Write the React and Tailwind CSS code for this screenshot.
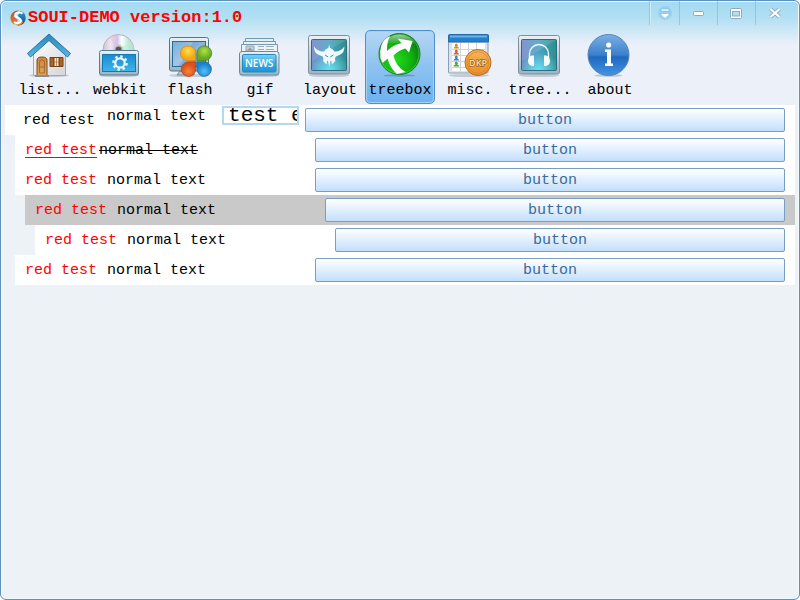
import React from "react";

const MONO = "font-['Liberation_Mono','Noto_Sans_CJK_SC',monospace]";

function Logo() {
  return (
    <svg viewBox="0 0 16 16" className="size-4 shrink-0" aria-hidden="true">
      <defs>
        <linearGradient id="logoOrange" x1="0" y1="0" x2="0" y2="1">
          <stop offset="0" stopColor="#b5532c" />
          <stop offset="1" stopColor="#f2792b" />
        </linearGradient>
        <linearGradient id="logoBlue" x1="0" y1="0" x2="0" y2="1">
          <stop offset="0" stopColor="#2d9bd8" />
          <stop offset="1" stopColor="#174a78" />
        </linearGradient>
      </defs>
      <path d="M9 .5C4 .2.5 3.500.5 8c0 3 1.500 5.500 4 6.700L8 10 3.500 6.500Z" fill="url(#logoOrange)" />
      <path d="M10 .8c3.500.8 5.700 3.700 5.700 7.200 0 4.500-3.500 7.700-8 7.500l4.800-5L8 6Z" fill="url(#logoBlue)" />
      <path d="M5 14.800q5-.6 6.500-3.500l2 .5q-2 3.700-5.500 3.700Z" fill="#f2792b" />
      <path d="M12.500 3.600C10 1.800 5.400 2.200 5.200 5c-.1 2.800 5.800 2.900 5.700 5.700-.1 2.600-4.400 3.200-7 1.500" fill="none" stroke="#fff" strokeWidth="2" />
    </svg>
  );
}

function Icon({ children }) {
  return (
    <svg viewBox="0 0 48 48" className="size-12 shrink-0" aria-hidden="true">
      {children}
    </svg>
  );
}

function SharedDefs() {
  return (
    <svg className="absolute size-0" aria-hidden="true">
      <defs>
        <linearGradient id="roof" x1="0" y1="0" x2="0" y2="1">
          <stop offset="0" stopColor="#2c86b8" />
          <stop offset="1" stopColor="#55b8e6" />
        </linearGradient>
        <linearGradient id="wall" x1="0" y1="0" x2="1" y2="1">
          <stop offset="0" stopColor="#ffffff" />
          <stop offset="1" stopColor="#d3d5d9" />
        </linearGradient>
        <linearGradient id="door" x1="0" y1="0" x2="0" y2="1">
          <stop offset="0" stopColor="#c98444" />
          <stop offset="1" stopColor="#e2a65a" />
        </linearGradient>
        <linearGradient id="box" x1="0" y1="0" x2="0" y2="1">
          <stop offset="0" stopColor="#eaf1f4" />
          <stop offset="1" stopColor="#9fb3be" />
        </linearGradient>
        <linearGradient id="panel" x1="0" y1="0" x2="0" y2="1">
          <stop offset="0" stopColor="#178bd0" />
          <stop offset="1" stopColor="#3fb4ea" />
        </linearGradient>
        <linearGradient id="news" x1="0" y1="0" x2="0" y2="1">
          <stop offset="0" stopColor="#82d0f2" />
          <stop offset=".45" stopColor="#3fb0e6" />
          <stop offset="1" stopColor="#1a93d6" />
        </linearGradient>
        <linearGradient id="disc" x1="0" y1="0" x2="1" y2="0">
          <stop offset="0" stopColor="#c8c9cd" />
          <stop offset=".25" stopColor="#f3e3f1" />
          <stop offset=".45" stopColor="#c9c4ee" />
          <stop offset=".6" stopColor="#ffffff" />
          <stop offset=".8" stopColor="#c6eadb" />
          <stop offset="1" stopColor="#c3c5ca" />
        </linearGradient>
        <linearGradient id="screen" x1="0" y1="0" x2="1" y2="1">
          <stop offset="0" stopColor="#4c9bd0" />
          <stop offset=".5" stopColor="#8db4dd" />
          <stop offset="1" stopColor="#3a8bc8" />
        </linearGradient>
        <linearGradient id="tile" x1="0" y1="0" x2="1" y2="0">
          <stop offset="0" stopColor="#7486c4" />
          <stop offset=".5" stopColor="#4aa3c4" />
          <stop offset="1" stopColor="#2c8f88" />
        </linearGradient>
        <radialGradient id="tileGlow" cx=".5" cy="1" r=".6">
          <stop offset="0" stopColor="#6ce0ef" />
          <stop offset="1" stopColor="#6ce0ef" stopOpacity="0" />
        </radialGradient>
        <radialGradient id="green" cx=".4" cy=".65" r=".65">
          <stop offset="0" stopColor="#22dc1c" />
          <stop offset=".6" stopColor="#10b30f" />
          <stop offset="1" stopColor="#087c12" />
        </radialGradient>
        <linearGradient id="gloss" x1="0" y1="0" x2="0" y2="1">
          <stop offset="0" stopColor="#fff" stopOpacity=".6" />
          <stop offset="1" stopColor="#fff" stopOpacity="0" />
        </linearGradient>
        <linearGradient id="info" x1="0" y1="0" x2="0" y2="1">
          <stop offset="0" stopColor="#7dafe3" />
          <stop offset=".5" stopColor="#3a7fcd" />
          <stop offset=".55" stopColor="#1f68bf" />
          <stop offset="1" stopColor="#4594e2" />
        </linearGradient>
        <linearGradient id="coin" x1="0" y1="0" x2="0" y2="1">
          <stop offset="0" stopColor="#f9b658" />
          <stop offset="1" stopColor="#e98d28" />
        </linearGradient>
        <radialGradient id="pYellow" cy=".35"><stop offset="0" stopColor="#ffe04a" /><stop offset="1" stopColor="#f6a615" /></radialGradient>
        <radialGradient id="pGreen" cy=".35"><stop offset="0" stopColor="#b0e048" /><stop offset="1" stopColor="#67aa22" /></radialGradient>
        <radialGradient id="pRed" cy=".65"><stop offset="0" stopColor="#fa8438" /><stop offset="1" stopColor="#d94f1e" /></radialGradient>
        <radialGradient id="pBlue" cy=".65"><stop offset="0" stopColor="#55c0f6" /><stop offset="1" stopColor="#1e84d0" /></radialGradient>
      </defs>
    </svg>
  );
}

const Shadow = () => <ellipse cx="23" cy="44.500" rx="20" ry="1.600" fill="#7a8794" opacity=".35" />;

function HouseIcon() {
  return (
    <Icon>
      <Shadow />
      <path d="M7.500 20 23 7l16.500 13v24.500h-32Z" fill="url(#wall)" stroke="#a5a8ad" strokeWidth="1" />
      <path d="M23 3 1.500 22.500l3 3.500L23 9.500 41.500 26l3-3.500Z" fill="url(#roof)" stroke="#2878a4" strokeWidth="1" strokeLinejoin="round" />
      <path d="M11 45V29q0-3 5-3t5 3v16Z" fill="url(#door)" stroke="#7b4c20" />
      <path d="M13.500 42V31q0-2 2.500-2t2.500 2v11ZM13.500 36h5" fill="none" stroke="#a86a2d" />
      <path d="M24 26.500h4v9h-4ZM33 26.500h4v9h-4Z" fill="#a9672f" stroke="#71431d" />
      <path d="M28 26.500h5v9h-5Z" fill="#fde8bd" stroke="#71431d" />
      <path d="M30.500 26.500v9M28 31h5" stroke="#a9672f" strokeWidth=".7" />
      <path d="M9 44h14v2H9Z" fill="#858d96" />
    </Icon>
  );
}

function WebkitIcon() {
  return (
    <Icon>
      <Shadow />
      <circle cx="22.500" cy="19" r="15.500" fill="url(#disc)" stroke="#aeb2ba" />
      <path d="M22.500 19 13 6.500q5-3 9-3Z" fill="#f5b8cf" opacity=".4" />
      <path d="m22.500 19 13-9q3 4 3 9Z" fill="#b6efcf" opacity=".5" />
      <circle cx="22.500" cy="18.500" r="4" fill="#5b5552" stroke="#c8c8cb" strokeWidth="2" />
      <rect x="3.500" y="19.500" width="39" height="24.500" rx="2" fill="url(#box)" stroke="#547f9a" />
      <rect x="6.500" y="23.500" width="33" height="17" fill="url(#panel)" stroke="#1976ae" />
      <circle cx="24" cy="32" r="4.700" fill="none" stroke="#eef7fc" strokeWidth="2.200" />
      <circle cx="24" cy="32" r="6.600" fill="none" stroke="#eef7fc" strokeWidth="2.400" strokeDasharray="2.500 2.680" />
    </Icon>
  );
}

function FlashIcon() {
  return (
    <Icon>
      <Shadow />
      <path d="M14 40h14v4H11Z" fill="#b8cbd5" stroke="#708b9d" />
      <rect x="3.500" y="6.500" width="39" height="33.500" rx="2" fill="url(#box)" stroke="#52778d" />
      <rect x="6.500" y="10.500" width="33" height="25" fill="url(#screen)" stroke="#2a6b96" />
      <path d="M7 11h20L13 35H7Z" fill="#fff" opacity=".22" />
      <path d="M22.500 15a7 7 0 0 1 7.200 7v7.500h-7.200a7.300 7.300 0 1 1 0-14.500Z" fill="url(#pYellow)" stroke="#d98210" strokeWidth=".7" />
      <path d="M38.500 15a7.200 7.200 0 1 1 0 14.500H31V22a7 7 0 0 1 7.500-7Z" fill="url(#pGreen)" stroke="#4d8416" strokeWidth=".7" />
      <path d="M22.500 31h7.200v7.500a7.200 7.200 0 1 1-7.200-7.500Z" fill="url(#pRed)" stroke="#b43d16" strokeWidth=".7" />
      <path d="M31 31h7.500a7.200 7.200 0 1 1-7.500 7.500Z" fill="url(#pBlue)" stroke="#1367a8" strokeWidth=".7" />
    </Icon>
  );
}

function NewsIcon() {
  return (
    <Icon>
      <Shadow />
      <path d="M9.500 7.500h28V20h-28Z" fill="#e1edf4" stroke="#6f9bb3" />
      <path d="M7.500 10.500h32V20h-32Z" fill="#e7f0f5" stroke="#6f9bb3" />
      <path d="M5.500 13.500h36V22h-36Z" fill="#edf2f5" stroke="#6f9bb3" />
      <path d="M10 15h8v5h-8Z" fill="#c6cdd6" stroke="#9aa6b3" />
      <path d="m11 19.500 3-3 3 3Z" fill="#8f9cab" />
      <path d="M22 15.500h6m2 0h8M22 18.500h6m2 0h8" stroke="#a0abb6" />
      <rect x="3.500" y="20.500" width="39.500" height="23.500" rx="2.500" fill="url(#box)" stroke="#5c8faa" />
      <rect x="6.500" y="23.500" width="33.500" height="17.500" rx="1.500" fill="url(#news)" stroke="#2687ba" />
      <text x="23.200" y="36" textAnchor="middle" fill="#fff" className="font-['Open_Sans',sans-serif] text-[10px] font-semibold">NEWS</text>
    </Icon>
  );
}

function Tile({ children }) {
  return (
    <Icon>
      <Shadow />
      <rect x="2.500" y="4.500" width="41" height="38.500" rx="2" fill="url(#box)" stroke="#7b929e" />
      <rect x="5.500" y="8.500" width="35" height="31" rx="1" fill="url(#tile)" stroke="#2f6d86" />
      <rect x="6" y="9" width="34" height="30" fill="url(#tileGlow)" />
      <path d="M6 9h34L6 30Z" fill="#fff" opacity=".12" />
      {children}
    </Icon>
  );
}

function LayoutIcon() {
  return (
    <Tile>
      <path d="M8 15.500q4 5.500 10 5l1.500-2 2.800-1.500.9-3.500.9 3.500 2.800 1.500 1.500 2q6 .5 10-5 0 6-4 8l-4.500 2-1 2 .5 2.500-3.500 3.500-.7-4-.8.500-1.200 6-1.200-6-.8-.500-.7 4-3.500-3.500.5-2.500-1-2-4.500-2q-4-2-4-8Z" fill="#edf9fc" />
      <path d="m19 24 3.200 2M27.400 24l-3.200 2" stroke="#3f91b1" />
    </Tile>
  );
}

function TreeboxIcon() {
  return (
    <Icon>
      <ellipse cx="23.500" cy="44.500" rx="16" ry="1.200" fill="#35658f" opacity=".4" />
      <circle cx="23.500" cy="23" r="20.500" fill="url(#green)" stroke="#16831c" />
      <path d="M7 14q5-10.500 16.500-10.500T40 14q-16-5-33 0Z" fill="url(#gloss)" />
      <circle cx="23.500" cy="23" r="19.500" fill="none" stroke="#8bea84" strokeOpacity=".4" />
      <path d="M14 5Q8 7.500 5.500 14 3.500 20 4.500 27L6.500 32Q11 28 11.500 27.500 14 37 21 43L29.500 41Q20 36 17.500 24.500 23 19 29.500 17.500l3.500 4L36.500 10 21.500 7.500l4 4.500Q17 14 11 20 10.500 12 14 5Z" fill="#fff" />
    </Icon>
  );
}

function MiscIcon() {
  const marks = [
    ["#d69029", 15],
    ["#d06128", 21],
    ["#3d7fd0", 27],
    ["#45ac30", 33],
  ];
  return (
    <Icon>
      <Shadow />
      <rect x="2.500" y="6.500" width="39.500" height="35.500" rx="1" fill="#dde3e9" stroke="#8ba0b5" />
      <path d="M6 12h33v28H6Z" fill="#fff" />
      <path d="M6 18.500h33M6 24.500h33M6 30.500h33M6 36.500h33M14.500 12v28M22.500 12v28M30.500 12v28" stroke="#cdd3dc" />
      {marks.map(([fill, y]) => (
        <path key={y} d={`M7.500 ${y + 2.5}q0-1.500 2-2a1.500 1.500 0 1 1 1.600 0q2 .5 2 2Z`} fill={fill} />
      ))}
      <path d="M2.500 11V4.500q0-1 1-1h38q1 0 1 1V11Z" fill="#2380cf" stroke="#2869a5" />
      <path d="M4 4.500h37v2H4Z" fill="#66b3ea" />
      <circle cx="32" cy="31.500" r="13" fill="url(#coin)" stroke="#b86c1e" />
      <circle cx="32" cy="31.500" r="10.800" fill="none" stroke="#d28731" strokeWidth=".8" />
      <text x="32" y="35" textAnchor="middle" fill="#ffdf9f" stroke="#a8621f" strokeWidth="1.400" paintOrder="stroke" className="font-['Open_Sans',sans-serif] text-[9px] font-semibold">DKP</text>
    </Icon>
  );
}

function HeadphonesIcon() {
  return (
    <Tile>
      <path d="M13.500 27v-4a9.500 9.500 0 0 1 19 0v4" fill="none" stroke="#f3fbfd" strokeWidth="1.300" />
      <path d="M16 24.500h2V35h-2q-4-1-4-5.200t4-5.300ZM30 24.500h-2V35h2q4-1 4-5.200t-4-5.300Z" fill="#f3fbfd" />
    </Tile>
  );
}

function InfoIcon() {
  return (
    <Icon>
      <ellipse cx="22.500" cy="44.500" rx="14" ry="1.300" fill="#7a8794" opacity=".4" />
      <circle cx="22.500" cy="24" r="20.500" fill="url(#info)" stroke="#5584ba" />
      <circle cx="22.700" cy="14" r="2.600" fill="#fff" />
      <path d="M19 18.500h6V32.500h2V35h-8v-2.500h2V21h-2Z" fill="#fff" />
    </Icon>
  );
}

const tools = [
  { label: "list...", Glyph: HouseIcon },
  { label: "webkit", Glyph: WebkitIcon },
  { label: "flash", Glyph: FlashIcon },
  { label: "gif", Glyph: NewsIcon },
  { label: "layout", Glyph: LayoutIcon },
  { label: "treebox", Glyph: TreeboxIcon, active: true },
  { label: "misc.", Glyph: MiscIcon },
  { label: "tree...", Glyph: HeadphonesIcon },
  { label: "about", Glyph: InfoIcon },
];

function ToolButton({ label, Glyph, active }) {
  const look = active
    ? "border-[#4f8fcb] bg-linear-to-b from-[#b4d6f3] via-[#8dc2ef] to-[#6cb2ef] shadow-[inset_0_0_0_1px_#a5d0f4]"
    : "border-transparent";
  return (
    <button type="button" aria-pressed={!!active} className={`flex h-[74px] w-[70px] flex-col items-center rounded-[5px] border ${look}`}>
      <Glyph />
      <span className="text-[15px] leading-6 text-black">{label}</span>
    </button>
  );
}

function Caption({ label, width, lit, children }) {
  return (
    <button
      type="button"
      aria-label={label}
      className={`flex h-6 ${width} items-center justify-center border-l border-[#7fb4d6]/60 ${lit ? "shadow-[inset_1px_1px_0_#d3effa]" : ""}`}
    >
      <svg viewBox="0 0 16 16" className="size-4" aria-hidden="true">{children}</svg>
    </button>
  );
}

function TitleBar() {
  return (
    <header className="flex h-7 items-start pl-[9px]">
      <h1 className="flex flex-1 items-center gap-0.5 pt-1 text-[17px] leading-6 font-bold text-[#ff0000]">
        <Logo />
        <span className="pt-px">SOUI-DEMO version:1.0</span>
      </h1>
      <div className="flex pr-1.5">
        <Caption label="Menu" width="w-[30px]" lit>
          <circle cx="8" cy="8" r="7" fill="#67b5e8" opacity=".3" />
          <path d="M4 4h8v2H4ZM4 8.500h8v1.500l-4 3.500-4-3.500Z" fill="#fff" stroke="#79b8df" strokeWidth=".6" />
        </Caption>
        <Caption label="Minimize" width="w-[38px]">
          <rect x="2.500" y="6.500" width="10" height="4" rx="1" fill="#fff" stroke="#87abc0" />
        </Caption>
        <Caption label="Maximize" width="w-[38px]">
          <rect x="1.500" y="3.500" width="11" height="10" rx="1" fill="#fff" stroke="#87abc0" />
          <rect x="3.500" y="6.500" width="7" height="4.500" fill="#b4def1" stroke="#87abc0" />
        </Caption>
        <Caption label="Close" width="w-[38px]">
          <path d="m3.500 4 9 8m0-8-9 8" stroke="#87abc0" strokeWidth="3.800" />
          <path d="m3.500 4 9 8m0-8-9 8" stroke="#fff" strokeWidth="2.200" />
        </Caption>
      </div>
    </header>
  );
}

function RowButton() {
  return (
    <button type="button" className="mr-2.5 h-6 flex-1 rounded-[2px] border border-[#7a9dc2] bg-linear-to-b from-white to-[#c3dffc] pt-0.5 text-[15px] leading-5 text-[#3d6a9c]">
      button
    </button>
  );
}

const rows = [
  { indent: "ml-2.5", marked: true },
  { indent: "ml-2.5" },
  { indent: "ml-5", selected: true },
  { indent: "ml-[30px]" },
  { indent: "ml-2.5" },
];

function TreeRow({ indent, marked, selected }) {
  return (
    <li className={`${indent} flex h-[30px] items-center ${selected ? "bg-[#c9c9c9]" : "bg-white"}`}>
      <p className={`flex w-[300px] shrink-0 pt-0.5 pl-2.5 ${marked ? "gap-0.5" : "gap-2.5"}`}>
        <span className={`text-[#ff0000] ${marked ? "underline decoration-[#ff0000] decoration-1 underline-offset-3" : ""}`}>red test</span>
        <span className={marked ? "line-through decoration-1" : ""}>normal text</span>
      </p>
      <RowButton />
    </li>
  );
}

export default function App() {
  return (
    <div className={`${MONO} flex min-h-screen flex-col rounded-md border border-[#5a91bd] bg-[#edf2f7] bg-[linear-gradient(#a3daf2_0,#b0dff3_16px,#ebf0f9_44px,#ecf0f9_140px,#edf2f7_150px)] text-[15px] leading-5 text-black shadow-[inset_0_0_0_1px_#f4fbff]`}>
      <SharedDefs />
      <TitleBar />
      <nav className="flex pt-px pl-3.5">
        {tools.map((tool) => (
          <ToolButton key={tool.label} {...tool} />
        ))}
      </nav>
      <main className="px-1 pt-px">
        <ul>
          <li className="flex h-[30px] bg-white">
            <div className="flex w-[300px] shrink-0 items-start pt-px pl-[18px]">
              <span className="pt-[5px]">red test</span>
              <span className="ml-3 pt-px">normal text</span>
              <input
                aria-label="Edit"
                defaultValue="test edit"
                className="ml-4 h-[19px] w-[77px] border-2 border-[#b4d9ee] bg-white pl-1 text-[21px] leading-6 outline-none"
              />
            </div>
            <div className="flex flex-1 items-center">
              <RowButton />
            </div>
          </li>
          {rows.map((row, i) => (
            <TreeRow key={i} {...row} />
          ))}
        </ul>
      </main>
    </div>
  );
}
